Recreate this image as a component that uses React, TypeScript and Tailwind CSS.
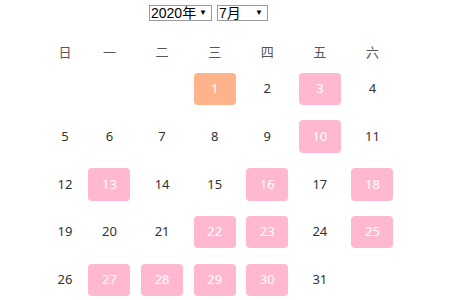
import React from "react";

const orange = new Set([1]);
const pink = new Set([3, 10, 13, 16, 18, 22, 23, 25, 27, 28, 29, 30]);

const weeks: (number | null)[][] = [
  [null, null, null, 1, 2, 3, 4],
  [5, 6, 7, 8, 9, 10, 11],
  [12, 13, 14, 15, 16, 17, 18],
  [19, 20, 21, 22, 23, 24, 25],
  [26, 27, 28, 29, 30, 31, null],
];

const heads = ["日", "一", "二", "三", "四", "五", "六"];

function Cell({ i, children }: { i: number; children?: React.ReactNode }) {
  return (
    <div className={(i === 0 ? "w-[36.4px]" : "w-[52.6px]") + " flex items-center justify-center"}>
      {children}
    </div>
  );
}

function Sel({ label, w }: { label: string; w: string }) {
  return (
    <div className={`${w} h-[16px] border border-[#9a9a9a] bg-white flex items-center justify-between pl-[1px] pr-[4px] text-[14px] leading-none text-black`} style={{ fontFamily: '"Liberation Sans", "Noto Sans CJK SC", sans-serif' }}>
      <span>{label}</span>
      <span className="text-[8px]">▼</span>
    </div>
  );
}

export default function App() {
  return (
    <div className="w-[450px] h-[300px] bg-white overflow-hidden" style={{ fontFamily: '"Noto Sans", "Noto Sans CJK SC", sans-serif' }}>
      <div className="pt-[5px] pl-[149px] flex gap-[5px]">
        <Sel label="2020年" w="w-[63px]" />
        <Sel label="7月" w="w-[51px]" />
      </div>
      <div className="mt-[20px] ml-[46.8px]">
        <div className="flex h-[24px] text-[13px] text-[#555]">
          {heads.map((h, i) => (
            <Cell key={h} i={i}>{h}</Cell>
          ))}
        </div>
        {weeks.map((wk, r) => (
          <div key={r} className="flex h-[47.75px] text-[13px] text-[#333]">
            {wk.map((d, i) => (
              <Cell key={i} i={i}>
                {d === null ? null : orange.has(d) ? (
                  <div className="w-[42px] h-[32.5px] rounded-[4px] bg-[#ffb38a] text-white flex items-center justify-center">{d}</div>
                ) : pink.has(d) ? (
                  <div className="w-[42px] h-[32.5px] rounded-[4px] bg-[#ffb8d0] text-white flex items-center justify-center">{d}</div>
                ) : (
                  <span>{d}</span>
                )}
              </Cell>
            ))}
          </div>
        ))}
      </div>
    </div>
  );
}
